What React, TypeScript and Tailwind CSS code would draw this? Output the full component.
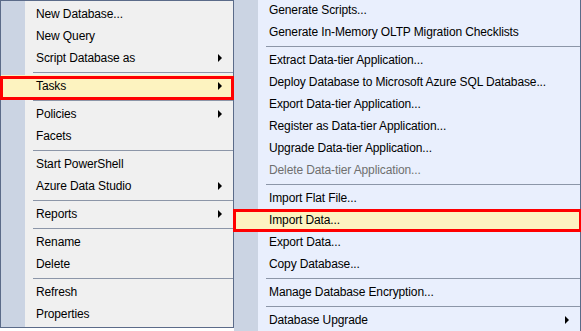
import React from 'react';

type Item = { label?: string; sub?: boolean; disabled?: boolean; marked?: boolean; sep?: boolean };

const leftItems: Item[] = [
  { label: 'New Database...' },
  { label: 'New Query' },
  { label: 'Script Database as', sub: true },
  { sep: true },
  { label: 'Tasks', sub: true, marked: true },
  { sep: true },
  { label: 'Policies', sub: true },
  { label: 'Facets' },
  { sep: true },
  { label: 'Start PowerShell' },
  { label: 'Azure Data Studio', sub: true },
  { sep: true },
  { label: 'Reports', sub: true },
  { sep: true },
  { label: 'Rename' },
  { label: 'Delete' },
  { sep: true },
  { label: 'Refresh' },
  { label: 'Properties' },
];

const rightItems: Item[] = [
  { label: 'Generate Scripts...' },
  { label: 'Generate In-Memory OLTP Migration Checklists' },
  { sep: true },
  { label: 'Extract Data-tier Application...' },
  { label: 'Deploy Database to Microsoft Azure SQL Database...' },
  { label: 'Export Data-tier Application...' },
  { label: 'Register as Data-tier Application...' },
  { label: 'Upgrade Data-tier Application...' },
  { label: 'Delete Data-tier Application...', disabled: true },
  { sep: true },
  { label: 'Import Flat File...' },
  { label: 'Import Data...', marked: true },
  { label: 'Export Data...' },
  { label: 'Copy Database...' },
  { sep: true },
  { label: 'Manage Database Encryption...' },
  { sep: true },
  { label: 'Database Upgrade', sub: true },
];

function Arrow() {
  return <span className="h-0 w-0 border-y-[4px] border-l-[4px] border-y-transparent border-l-black" />;
}

function MenuRows({ items, side }: { items: Item[]; side: 'left' | 'right' }) {
  return (
    <>
      {items.map((item, i) => {
        if (item.sep) {
          return (
            <div key={i} className="flex h-[6px] items-center pl-[32px]">
              <div className="h-px w-full bg-[#8c96a8]" />
            </div>
          );
        }
        return (
          <div
            key={i}
            className={`relative flex h-[22px] items-center justify-between pl-[35px] pr-[11px] ${
              item.marked ? 'bg-[#fdf3c0]' : ''
            } ${item.disabled ? 'text-[#6f6f6f]' : 'text-black'}`}
          >
            <span className="relative z-10 whitespace-nowrap">{item.label}</span>
            {item.sub && <Arrow />}
            {item.marked && side === 'left' && (
              <div className="pointer-events-none absolute -left-px -right-px top-px h-[24px] border-[3px] border-[#ff0000]" />
            )}
            {item.marked && side === 'right' && (
              <div className="pointer-events-none absolute -left-px -right-[2px] top-0 h-[23px] border-[3px] border-[#ff0000]" />
            )}
          </div>
        );
      })}
    </>
  );
}

export default function App() {
  return (
    <div className="flex h-[331px] w-[581px] items-start overflow-hidden bg-white font-['Liberation_Sans',Arial,sans-serif] text-[12px] leading-none tracking-[-0.12px]">
      <div className="w-[234px] shrink-0 border border-[#5b6b89] bg-[linear-gradient(to_right,#cbd4e3_24px,#f0f0f0_24px)] pb-[2px] pt-[2px]">
        <MenuRows items={leftItems} side="left" />
      </div>
      <div className="-mt-px h-[333px] flex-1 border-r border-[#5b6b89] bg-[linear-gradient(to_right,#cbd4e3_24px,#e9effd_24px)]">
        <MenuRows items={rightItems} side="right" />
      </div>
    </div>
  );
}
